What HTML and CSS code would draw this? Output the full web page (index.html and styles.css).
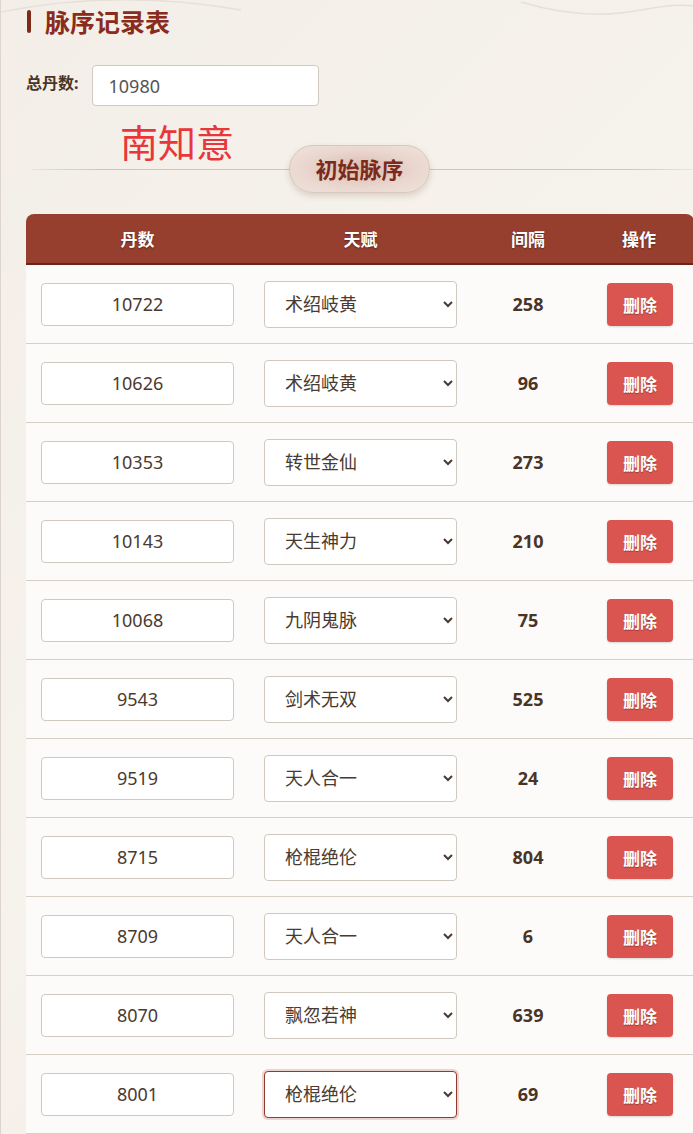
FILE: index.html
```html
<!DOCTYPE html>
<html lang="zh-CN">
  <head>
    <meta charset="UTF-8" />
    <meta name="viewport" content="width=device-width, initial-scale=1.0" />
    <title>脉序记录表</title>
    <link rel="stylesheet" href="styles.css">
  </head>
  <body>
    <div class="page">
      <svg class="waves" width="693" height="40" viewBox="0 0 693 40">
        <path d="M0 12 C 80 -4, 160 -4, 240 10" />
        <path d="M520 2 C 560 14, 600 18, 640 10 C 660 6, 680 4, 693 6" />
      </svg>

      <h2 class="title">脉序记录表</h2>

      <div class="total">
        <label for="total">总丹数:</label>
        <input type="text" id="total" value="10980" />
      </div>

      <div class="sign">南知意</div>

      <div class="divider">
        <span class="pill">初始脉序</span>
      </div>

      <table id="dataTable">
        <thead>
          <tr>
            <th class="col-dan">丹数</th>
            <th class="col-tf">天赋</th>
            <th class="col-gap">间隔</th>
            <th class="col-op">操作</th>
          </tr>
        </thead>
        <tbody></tbody>
      </table>
    </div>

    <script>
      const talents = [
        "术绍岐黄",
        "转世金仙",
        "天生神力",
        "九阴鬼脉",
        "剑术无双",
        "天人合一",
        "枪棍绝伦",
        "飘忽若神",
      ];

      const rows = [
        [10722, "术绍岐黄", 258],
        [10626, "术绍岐黄", 96],
        [10353, "转世金仙", 273],
        [10143, "天生神力", 210],
        [10068, "九阴鬼脉", 75],
        [9543, "剑术无双", 525],
        [9519, "天人合一", 24],
        [8715, "枪棍绝伦", 804],
        [8709, "天人合一", 6],
        [8070, "飘忽若神", 639],
        [8001, "枪棍绝伦", 69],
      ];

      const $ = (selector) => document.querySelector(selector);

      const renderTable = () => {
        $("#dataTable tbody").innerHTML = rows
          .map(
            ([dan, tf, gap], i) => `
          <tr>
            <td><input class="dan" type="text" value="${dan}" /></td>
            <td>
              <select class="tf${i === rows.length - 1 ? " focused" : ""}">
                ${talents
                  .map(
                    (t) =>
                      `<option${t === tf ? " selected" : ""}>${t}</option>`
                  )
                  .join("")}
              </select>
            </td>
            <td class="gap">${gap}</td>
            <td class="op"><button class="btn-delete">删除</button></td>
          </tr>`
          )
          .join("");
      };

      renderTable();
    </script>
  </body>
</html>
```

FILE: styles.css
```css
body {
  margin: 0;
  font-family: "Noto Sans", "Noto Sans CJK SC", sans-serif;
  background: linear-gradient(135deg, #f3efe8 0%, #f6f2ec 50%, #f3eee4 100%);
  color: #4a3426;
  overflow: hidden;
}
.page {
  position: relative;
  min-height: 1134px;
  border-left: 1px solid #ddd5cb;
  padding-left: 25px;
}
.waves {
  position: absolute;
  top: 0;
  left: 0;
}
.waves path {
  fill: none;
  stroke: #e6e0d8;
  stroke-width: 1.5;
}
.title {
  position: relative;
  margin: 0;
  padding: 5px 0 0 19px;
  height: 35px;
  font-size: 25px;
  font-weight: bold;
  color: #8a2c1c;
  line-height: 34px;
}
.title::before {
  content: "";
  position: absolute;
  left: 1px;
  top: 10px;
  width: 4px;
  height: 23px;
  border-radius: 2px;
  background-color: #7e2a1a;
}
.total {
  display: flex;
  align-items: center;
  gap: 13px;
  margin-top: 25px;
}
.total label {
  font-size: 16px;
  font-weight: bold;
  color: #4a3426;
  margin-top: -8px;
}
.total input {
  width: 227px;
  height: 41px;
  box-sizing: border-box;
  padding: 0 16px;
  border: 1px solid #d0c9c0;
  border-radius: 4px;
  font-family: inherit;
  font-size: 18px;
  color: #555;
  background-color: #fff;
}
.sign {
  position: absolute;
  left: 119px;
  top: 116px;
  font-size: 38px;
  color: #e8373a;
  line-height: 52px;
}
.divider {
  position: relative;
  display: flex;
  justify-content: center;
  margin-top: 39px;
}
.divider::before {
  content: "";
  position: absolute;
  left: 5px;
  right: 0;
  top: 24px;
  height: 1px;
  background: linear-gradient(90deg, rgba(190, 180, 170, 0.2), #cfc5bb 10%, #cfc5bb 90%, rgba(190, 180, 170, 0.2));
}
.pill {
  position: relative;
  width: 141px;
  height: 48px;
  box-sizing: border-box;
  border: 1px solid #d6c8bf;
  border-radius: 24px;
  background: radial-gradient(ellipse at center, #dcbab0 0%, #ead8d0 60%, #eee2da 100%);
  box-shadow: 0 3px 6px rgba(120, 80, 60, 0.2);
  font-size: 22px;
  font-weight: bold;
  color: #7c2a1b;
  line-height: 46px;
  text-align: center;
}
table {
  width: 668px;
  margin-top: 21px;
  border-collapse: separate;
  border-spacing: 0;
  table-layout: fixed;
}
th {
  height: 49px;
  padding: 0;
  background-color: #973f2f;
  border-bottom: 2px solid #6c2419;
  color: #fff;
  font-size: 17px;
  font-weight: bold;
  text-shadow: 0 1px 2px rgba(0, 0, 0, 0.4);
}
th:first-child {
  border-top-left-radius: 8px;
}
th:last-child {
  border-top-right-radius: 8px;
}
.col-dan {
  width: 223px;
}
.col-tf {
  width: 223px;
}
.col-gap {
  width: 112px;
}
td {
  height: 78px;
  padding: 0 15px;
  background-color: #fdfbf9;
  border-bottom: 1px solid #d6cfc6;
  text-align: center;
  vertical-align: middle;
}
input.dan {
  width: 100%;
  height: 43px;
  box-sizing: border-box;
  border: 1px solid #d0c9c0;
  border-radius: 4px;
  background-color: #fff;
  font-family: inherit;
  font-size: 18px;
  color: #4a3a30;
  text-align: center;
}
select.tf {
  width: 193px;
  height: 47px;
  box-sizing: border-box;
  padding: 0 12px 0 16px;
  border: 1px solid #d0c9c0;
  border-radius: 4px;
  background-color: #fff;
  font-family: inherit;
  font-size: 18px;
  color: #4a3a30;
}
select.focused {
  border-color: #8e3a2c;
  box-shadow: 0 0 0 2px rgba(200, 140, 130, 0.35);
}
.gap {
  font-size: 18px;
  font-weight: bold;
  color: #4a3426;
}
.op {
  padding: 0 20px 0 22px;
}
.btn-delete {
  width: 66px;
  height: 43px;
  border: none;
  border-radius: 4px;
  background-color: #db5550;
  color: #fff;
  font-family: inherit;
  font-size: 17px;
  font-weight: bold;
  text-shadow: 0 1px 1px rgba(0, 0, 0, 0.3);
  box-shadow: 0 1px 2px rgba(0, 0, 0, 0.15);
  cursor: pointer;
}
```
